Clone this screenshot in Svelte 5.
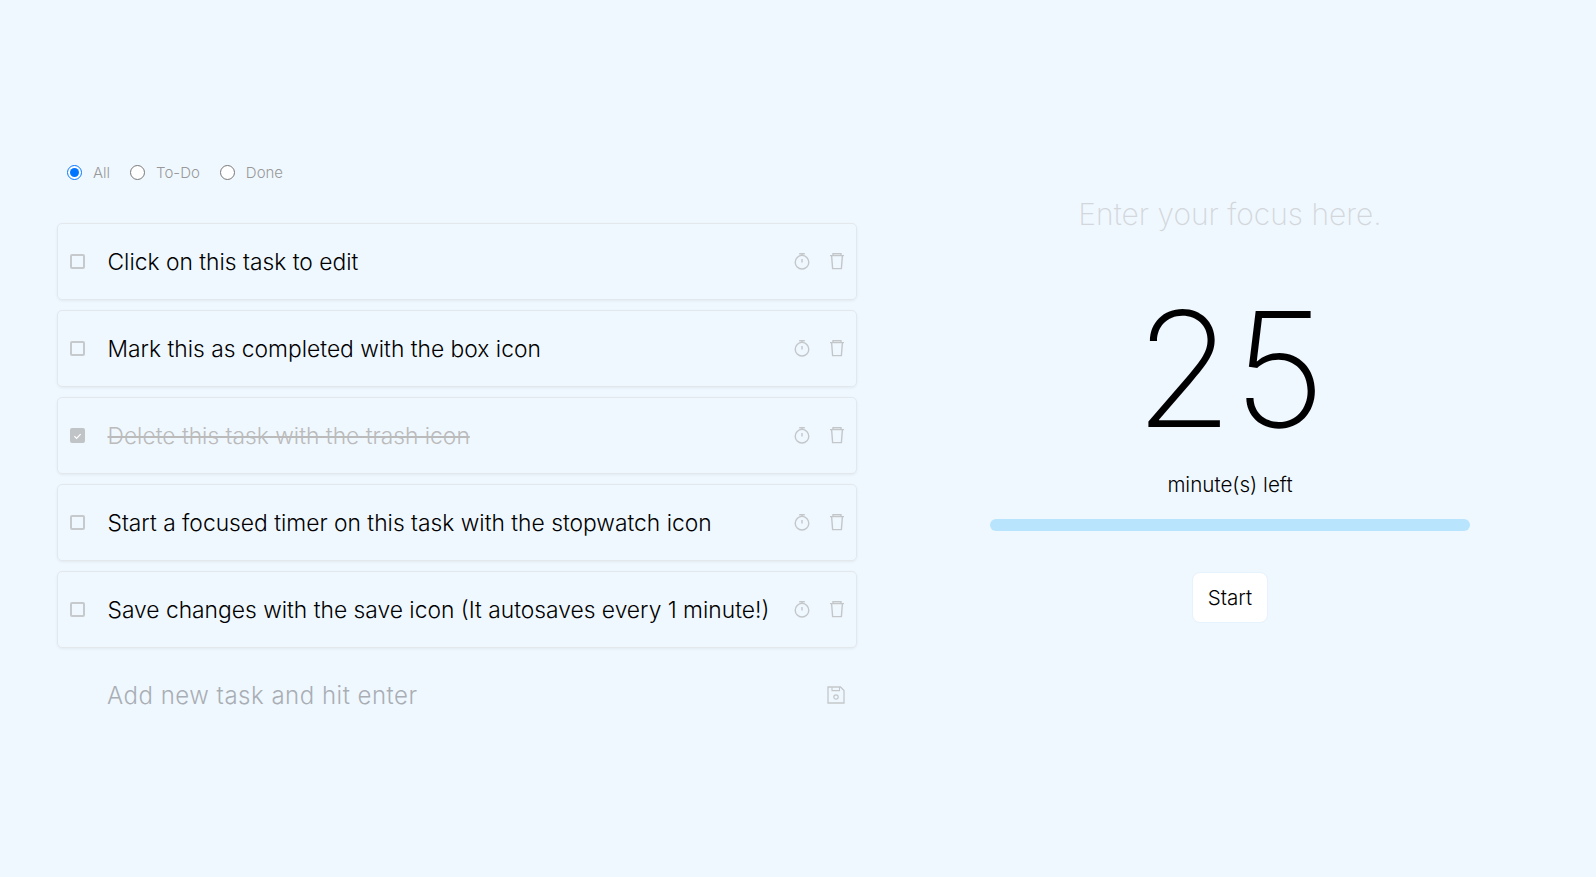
<script>
    let filter = 'all';
    let focus = '';
    let newTask = '';
    let tasks = [
        { text: 'Click on this task to edit', done: false },
        { text: 'Mark this as completed with the box icon', done: false },
        { text: 'Delete this task with the trash icon', done: true },
        { text: 'Start a focused timer on this task with the stopwatch icon', done: false },
        { text: 'Save changes with the save icon (It autosaves every 1 minute!)', done: false }
    ];
    const filters = [
        { id: 'all', label: 'All' },
        { id: 'todo', label: 'To-Do' },
        { id: 'done', label: 'Done' }
    ];
</script>

<main>
    <section class="list">
        <div class="filters">
            {#each filters as f}
                <label class="filter">
                    <input type="radio" name="filter" value={f.id} bind:group={filter} />
                    <span>{f.label}</span>
                </label>
            {/each}
        </div>

        {#each tasks as task}
            <div class="task">
                <button class="box" class:checked={task.done} on:click={() => (task.done = !task.done)} aria-label="toggle">
                    {#if task.done}
                        <svg viewBox="0 0 14 14" width="14" height="14"><path d="M3 7.2l2.8 2.8L11 4.6" fill="none" stroke="#fff" stroke-width="1.6" /></svg>
                    {/if}
                </button>
                <span class="text" class:done={task.done}>{task.text}</span>
                <svg class="icon" viewBox="0 1 16 18" width="16" height="18">
                    <path d="M5.2 1.7h5.6M8 1.7v2M8 7v3.4" fill="none" stroke="currentColor" stroke-width="1.4" />
                    <circle cx="8" cy="10.2" r="6.8" fill="none" stroke="currentColor" stroke-width="1.4" />
                </svg>
                <svg class="icon trash" viewBox="0 1 16 18" width="16" height="18">
                    <path d="M1 3.6h14M4 3.6V1.7h8v1.9M2.6 3.6l1 13h8.8l1-13" fill="none" stroke="currentColor" stroke-width="1.4" />
                </svg>
            </div>
        {/each}

        <div class="add">
            <input type="text" placeholder="Add new task and hit enter" bind:value={newTask} />
            <svg class="icon save" viewBox="0 0 18 18" width="18" height="18">
                <path d="M1 1h12.5L17 4.5V17H1z" fill="none" stroke="currentColor" stroke-width="1.3" />
                <path d="M5 1v3.6h7.5V1" fill="none" stroke="currentColor" stroke-width="1.1" />
                <circle cx="9" cy="11" r="2.2" fill="none" stroke="currentColor" stroke-width="1.2" />
            </svg>
        </div>
    </section>

    <section class="timer">
        <input class="focus" type="text" placeholder="Enter your focus here." bind:value={focus} />
        <div class="minutes">25</div>
        <div class="left">minute(s) left</div>
        <div class="bar"></div>
        <button class="start">Start</button>
    </section>
</main>

<style>
    :global(body) {
        background: #f0f8ff;
        font-family: Inter, "Liberation Sans", sans-serif;
    }

    main {
        display: flex;
        height: 877px;
        padding: 160px 0 0 57px;
        box-sizing: border-box;
    }

    .list {
        width: 800px;
    }

    .filters {
        display: flex;
        height: 26px;
        align-items: center;
        gap: 20px;
        padding-left: 10px;
        margin-bottom: 37px;
        transform: translateY(-1px);
    }

    .filter {
        display: flex;
        align-items: center;
        gap: 11px;
        font-size: 15px;
        font-weight: 300;
        color: #999;
    }

    .filter input {
        width: 15px;
        height: 15px;
        margin: 0;
        accent-color: #0075ff;
    }

    .task {
        display: flex;
        align-items: center;
        height: 77px;
        box-sizing: border-box;
        margin-bottom: 10px;
        padding: 0 11px 0 12px;
        border: 1px solid #e3e8ec;
        border-radius: 5px;
        box-shadow: 0 1px 3px rgba(0, 0, 0, 0.06);
    }

    .box {
        width: 15px;
        height: 15px;
        padding: 0;
        border: 2px solid #c6cacd;
        border-radius: 2px;
        background: transparent;
        display: flex;
        align-items: center;
        justify-content: center;
        flex: none;
    }

    .box.checked {
        background: #c0c4c7;
        border-color: #c0c4c7;
    }

    .text {
        flex: 1;
        margin-left: 22.5px;
        font-size: 22.8px;
        font-weight: 280;
        color: #000;
        white-space: nowrap;
    }

    .text.done {
        color: #bbb;
        text-decoration: line-through;
    }

    .icon {
        color: #c3c7ca;
        flex: none;
    }

    .trash {
        margin-left: 19px;
    }

    .add {
        display: flex;
        align-items: center;
        height: 74px;
        padding: 0 12px 0 50px;
    }

    .add input {
        flex: 1;
        border: none;
        outline: none;
        padding: 0;
        background: transparent;
        font: 300 24px Inter, "Liberation Sans", sans-serif;
        letter-spacing: 0.5px;
    }

    .add input::placeholder {
        color: #a9aeb5;
    }

    .timer {
        display: flex;
        flex-direction: column;
        align-items: center;
        width: 480px;
        margin-left: 133px;
        padding-top: 35px;
    }

    .focus {
        width: 100%;
        border: none;
        outline: none;
        background: transparent;
        text-align: center;
        font: 200 30px Inter, "Liberation Sans", sans-serif;
    }

    .focus::placeholder {
        color: #d3d7db;
    }

    .minutes {
        margin-top: 44px;
        font-size: 160px;
        font-weight: 200;
        line-height: 185px;
        color: #000;
    }

    .left {
        font-size: 20.6px;
        font-weight: 300;
        margin-top: 10px;
        color: #000;
    }

    .bar {
        width: 100%;
        height: 12px;
        margin-top: 22px;
        border-radius: 6px;
        background: #b8e4fe;
    }

    .start {
        margin-top: 41px;
        width: 76px;
        height: 51px;
        border: 1px solid #e6f2fc;
        border-radius: 8px;
        background: #fff;
        font: 300 20.6px Inter, "Liberation Sans", sans-serif;
        color: #000;
    }
</style>
